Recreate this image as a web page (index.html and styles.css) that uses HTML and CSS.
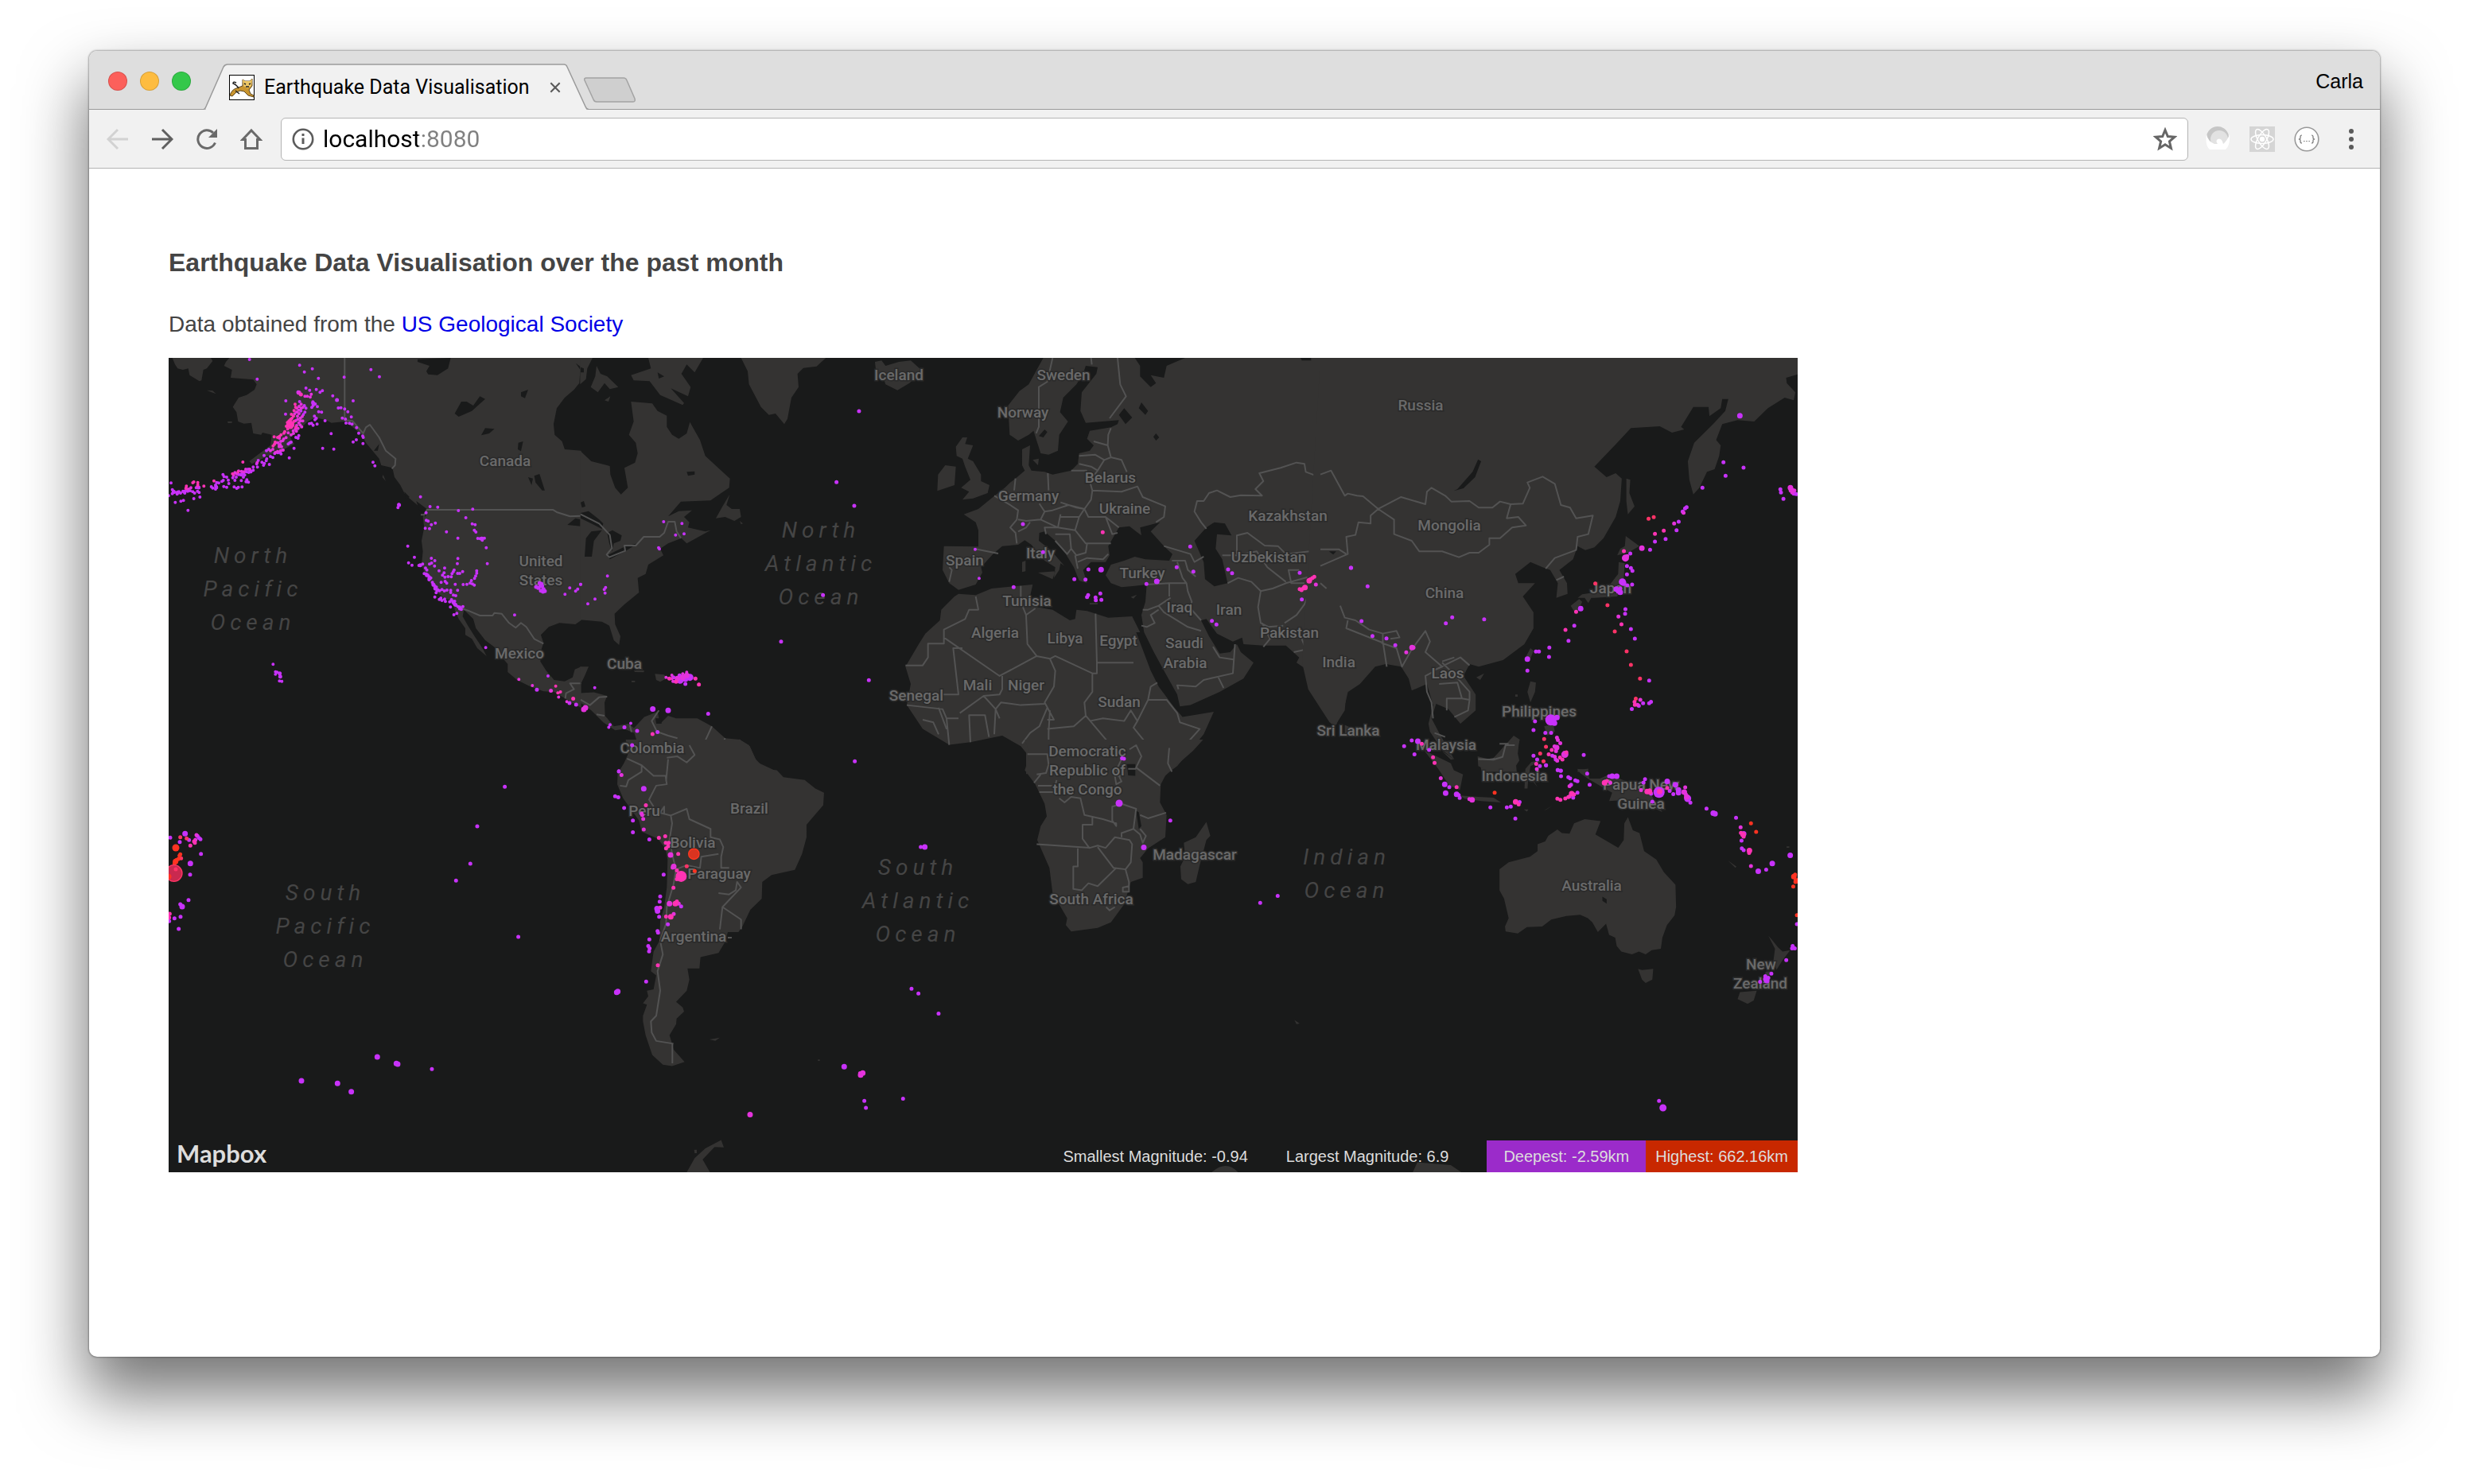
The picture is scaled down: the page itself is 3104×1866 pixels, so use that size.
FILE: index.html
```html
<!DOCTYPE html>
<html lang="en">
<head>
<meta charset="utf-8">
<title>Earthquake Data Visualisation</title>
<link rel="stylesheet" href="styles.css">
</head>
<body>
<div class="window">
  <header class="tabstrip">
    <div class="lights">
      <button class="light light-close" aria-label="Close window"></button>
      <button class="light light-min" aria-label="Minimise window"></button>
      <button class="light light-max" aria-label="Zoom window"></button>
    </div>
    <div class="tab">
      <svg class="tab-shape" viewBox="0 0 484 58" preserveAspectRatio="none" aria-hidden="true"><path d="M0 57.500Q2 57 3 54L25 4Q27 1 30 1H453Q456 1 457 4L480 54Q481 57 484 57.500" fill="#f1f1f1" stroke="#9a9a9a" stroke-width="1.500"/><path d="M3 58H481" stroke="#f1f1f1" stroke-width="2"/></svg>
      <svg class="favicon" viewBox="0 0 32 32" aria-hidden="true"><rect x=".5" y=".5" width="31" height="31" fill="#fff" stroke="#000"/><path d="M1 26Q3 19 9 17L17 14L17 6L20 8H26L29 5L29 14L25 19L27 24L31 26V28L24 26L19 21L14 20L9 22L4 27Z" fill="#c9952f" stroke="#5a4520" stroke-width="1"/><path d="M17 6L20 8H26L29 5L28 14L23 17L18 14Z" fill="#edc766"/><path d="M12 17Q9 12 5 11Q5 8 9 10M8 20L13 24M19 11L21 12M25 12L27 11M21 15H25" fill="none" stroke="#222" stroke-width="1.500"/></svg>
      <span class="tab-title">Earthquake Data Visualisation</span>
      <button class="tab-close" aria-label="Close tab"><svg viewBox="0 0 16 16"><path d="M1.500 1.500L14.500 14.500M14.500 1.500L1.500 14.500" stroke="#5a5a5a" stroke-width="2.400"/></svg></button>
    </div>
    <button class="new-tab" aria-label="New tab"><svg viewBox="0 0 68 32"><path d="M4 1H51Q54 1 55 4L65 27Q66 31 63 31H17Q14 31 13 28L2 4Q1 1 4 1Z" fill="#cfcfcf" stroke="#a3a3a3" stroke-width="1.500"/></svg></button>
    <button class="profile">Carla</button>
  </header>
  <nav class="toolbar" aria-label="Browser toolbar">
    <button class="tool" aria-label="Back"><svg viewBox="0 0 28 28"><path d="M14 2L2 14L14 26M2 14H27" fill="none" stroke="#d2d2d2" stroke-width="3"/></svg></button>
    <button class="tool" aria-label="Forward"><svg viewBox="0 0 28 28"><path d="M14 2L26 14L14 26M26 14H1" fill="none" stroke="#5f5f5f" stroke-width="3"/></svg></button>
    <button class="tool" aria-label="Reload"><svg viewBox="0 0 28 28"><path d="M24.500 18.500A11.300 11.300 0 1 1 22 6" fill="none" stroke="#6a6a6a" stroke-width="3"/><path d="M27 1V12H16Z" fill="#6a6a6a"/></svg></button>
    <button class="tool" aria-label="Home"><svg viewBox="0 0 28 28"><path d="M14 3L25 14.500H21.500V25.500H6.500V14.500H3Z" fill="none" stroke="#6a6a6a" stroke-width="3"/></svg></button>
    <div class="omnibox">
      <svg class="info" viewBox="0 0 28 28" aria-hidden="true"><circle cx="14" cy="14" r="12.200" fill="none" stroke="#5c5c5c" stroke-width="2.600"/><path d="M14 12.500V20M14 7V10" stroke="#5c5c5c" stroke-width="3"/></svg>
      <input class="url" type="text" value="localhost:8080" aria-label="Address">
      <button class="star" aria-label="Bookmark this page"><svg viewBox="0 0 30 30"><path d="M15 3.500L18.300 11.500L27 12.200L20.400 17.900L22.400 26.400L15 21.800L7.600 26.400L9.600 17.900L3 12.200L11.700 11.500Z" fill="none" stroke="#666" stroke-width="3"/></svg></button>
    </div>
    <div class="extensions">
      <button class="ext" aria-label="Phoenix extension"><svg viewBox="0 0 32 32"><path d="M2 14A14 14 0 0 1 30 14L22 22Q16 12 8 22Z" fill="#c6c6c6"/><circle cx="18" cy="16" r="11" fill="#e2e2e2"/><path d="M2 10Q0 24 6 29H26Q32 24 31 10Q28 18 23 22Q21 14 16 16Q13 18 16 22H12Q4 19 2 10Z" fill="#fff"/></svg></button>
      <button class="ext" aria-label="React extension"><svg viewBox="0 0 32 32"><path d="M0 0H32V32H0Z" fill="#d5d5d5"/><g fill="none" stroke="#fff" stroke-width="1.500"><ellipse cx="16" cy="16" rx="14" ry="5.400"/><ellipse cx="16" cy="16" rx="14" ry="5.400" transform="rotate(60 16 16)"/><ellipse cx="16" cy="16" rx="14" ry="5.400" transform="rotate(120 16 16)"/></g><circle cx="16" cy="16" r="3.200" fill="#fff"/></svg></button>
      <button class="ext" aria-label="JSON extension"><svg viewBox="0 0 32 32"><circle cx="16" cy="16" r="14.800" fill="#fff" stroke="#999" stroke-width="1.600"/><g fill="none" stroke="#777" stroke-width="1.200"><path d="M10 11Q8 11 8 13V15L6.500 16L8 17V19Q8 21 10 21M22 11Q24 11 24 13V15L25.500 16L24 17V19Q24 21 22 21"/><path d="M12 18.500H20" stroke-dasharray="1.500 1.700"/></g></svg></button>
      <button class="ext" aria-label="Menu"><svg viewBox="0 0 32 32"><g fill="#5a5a5a"><circle cx="16" cy="6" r="3"/><circle cx="16" cy="16" r="3"/><circle cx="16" cy="26" r="3"/></g></svg></button>
    </div>
  </nav>
  <main class="page">
    <h1 class="title">Earthquake Data Visualisation over the past month</h1>
    <p class="source">Data obtained from the <a href="#usgs">US Geological Society</a></p>
    <div class="map">
      <svg class="map-canvas" viewBox="212 450 2048 1024" role="img" aria-label="World map of earthquakes">
        <!-- North America, west -->
        <g transform="translate(210 450) scale(.3333)">
          <path class="land" d="M20 0L30 25L40 40L60 45L80 40L85 65L122 88L130 85L137 45L150 40L172 12L165 0Z
M235 0L222 15L215 30L245 45L240 75L325 82L338 100L330 120L300 140L270 150L248 185L262 205L268 240L290 248L318 245L325 285L355 290L360 282L395 290L390 330L350 360L310 390L320 400L390 365L440 345L480 325L465 300L500 270L530 240L560 225L600 235L620 245L670 240L700 262L735 290L750 320L775 350L800 380L808 405L850 415L858 450L880 480L900 520L915 530L950 560L975 580L965 600L970 640L960 690L965 730L960 780L975 820L1010 880L1045 905L1080 920L1085 950L1100 985L1125 1020L1125 1045L1150 1060L1170 1095L1205 1125L1195 1105L1180 1080L1160 1050L1135 1010L1115 975L1120 950L1155 985L1165 1020L1200 1065L1240 1095L1255 1120L1285 1155L1285 1185L1320 1215L1370 1240L1420 1258L1460 1260L1510 1290L1562 1320V1165L1538 1175L1530 1205L1500 1220L1460 1215L1430 1180L1408 1145L1412 1100L1420 1075L1410 1045L1440 1015L1480 1000L1540 1005L1562 990V350L1500 345L1490 315L1462 290L1458 250L1470 190L1500 150L1535 120L1555 95L1562 0Z
M150 122L172 124L185 136L168 130ZM228 240L245 240V245L230 246ZM815 440L825 465L812 450Z"/>
          <path class="water" d="M945 5L1070 0L1060 40L1020 65L985 62L978 50L990 30L945 15ZM1085 210L1110 165L1130 165L1155 180L1180 145L1200 155L1150 200L1100 222ZM1335 130L1362 120L1350 152L1335 145ZM1185 292L1200 265L1235 268L1215 285ZM1325 320L1343 315L1335 352L1323 345ZM1362 450L1380 455L1375 480ZM1385 445L1405 438L1425 500L1415 500L1390 470ZM1510 630L1540 605L1562 610V635ZM780 350L800 325L795 350ZM940 540L980 570L975 600L950 570ZM895 505L915 525L900 535ZM1542 20L1562 35V50Z"/>
          <path class="border" d="M670 0V235L700 238L740 285L750 262L765 252L800 300L825 350L862 380L860 405L848 418M957 592H970L980 573H1455L1470 582L1520 598L1562 596M1110 945L1140 955L1180 972H1228L1235 962L1262 965L1290 1000L1315 1018L1335 1000L1355 1015L1385 1060L1420 1078M1502 1285L1505 1265L1535 1250L1520 1228H1562"/>
        </g>
        <!-- North America east, Greenland, Caribbean -->
        <g transform="translate(730 450) scale(.3333)">
          <path class="land" d="M-2 350L40 390L110 408L112 440L130 490L152 515L178 490L165 415L205 395L215 360L208 320L182 290L200 240L190 165L270 172L290 200L325 218L325 260L345 290L370 305L400 285L412 242L450 310L470 370L530 425L563 455L560 490L530 510L490 538L378 542L330 598L370 578L420 575L390 600L410 620L405 640L470 655L490 650L400 700L380 680L330 700L300 720L312 745L255 780L245 815L215 830L220 885L165 930L128 965L130 1005L150 1050L145 1083L125 1065L108 1010L80 995L-2 988Z
M562 515L535 560L510 605L545 600L580 615L605 600L600 570L570 570L550 555ZM600 615L612 625L605 628Z
M255 0L265 40L190 65L200 85L260 88L300 140L385 178L390 170L340 115L405 145L415 110L380 60L400 25L430 55L462 0Z
M-2 0V100L20 80L25 40L45 0ZM60 30L75 60L100 70L142 110L110 118L90 95L65 130L38 110L55 70ZM90 160L112 145L105 165Z
M605 0L630 50L635 100L680 185L710 215L735 210L768 250L780 230L795 150L822 110L818 60L840 38L890 32L925 0Z
M1110 15L1135 10L1150 30L1200 15L1245 10L1290 50L1240 95L1195 122L1150 100L1145 85L1115 60Z
M-2 1165H30L15 1200L-2 1235ZM200 1180L240 1180L238 1186L205 1185ZM280 1192L315 1195L325 1208L300 1222L285 1215ZM192 1218H205V1223H192Z
M-2 1265L50 1262L100 1275L90 1300L92 1350L125 1390L180 1380L205 1400L200 1415L165 1400L130 1405L85 1375L40 1330L-2 1300Z
M198 1400L240 1355L290 1335L300 1380L330 1350L360 1360L440 1360L495 1390L545 1435L600 1440L638 1465L665 1525L740 1560H150L185 1480L210 1440Z"/>
          <path class="water" d="M0 585L30 578L70 610L85 625L80 645L40 625L0 605ZM15 750L20 680L40 655L80 650L50 690L42 750ZM100 660L120 650L155 670L150 690L125 700L118 730L108 700ZM100 745L170 710L215 700L170 728L110 760ZM0 545L12 540L18 560L5 565ZM400 430L430 428V440L405 445ZM290 55L315 70L295 78ZM282 1360L305 1360V1380H285ZM0 35L12 40V55H0Z"/>
          <path class="border" d="M0 590L70 625L110 668L118 718L98 742L108 752L168 728L165 708H208L238 675H298L315 660L330 618H355L362 655L378 680M0 1290L35 1310L70 1280L100 1278M60 1345L90 1350M185 1385L192 1412M295 1330L268 1370L288 1410L330 1425L365 1435M495 1390L472 1440L485 1460L495 1500L515 1515L550 1500L530 1465L545 1435M600 1440L590 1490L550 1500L615 1495L635 1470M410 1460L430 1475L485 1460"/>
        </g>
        <!-- South America -->
        <g transform="translate(730 930) scale(.3333 .3508)">
          <path class="land" d="M170 0L180 60L140 120L138 160L160 210L220 290L230 330L290 355L320 390L328 430L325 530L315 600L300 650L298 720L275 760L265 830L285 845L275 895L250 900L255 920L235 945L250 950L235 990L235 1010L245 1060L270 1130L310 1165L345 1170L392 1155L350 1110L345 1090L335 1060L360 1020L362 1000L390 975L385 960L360 940L400 900L410 860L403 820L448 820L452 780L520 765L545 725L555 690H595L610 670L640 610L683 570L685 510L720 485L808 467L835 410L852 350V305L915 235L918 190L885 175L845 145L765 135L740 110L695 105L660 70L635 20L600 0Z
M485 1075L505 1072L525 1068L508 1080ZM400 1551L430 1500L470 1465L530 1435L540 1462L505 1460L460 1505L488 1551ZM428 1470H438V1482H430ZM895 1147H902V1152H895Z"/>
          <path class="border" d="M175 68L230 92L275 130L320 130L325 160L285 165L258 215L275 240M330 70L322 150M148 165L172 168L180 145L230 115V92M325 65L365 60L400 82L430 55L410 20M300 262L340 272L400 248L410 285L490 320V350L525 358L538 385L530 420V460H560M340 272L345 300L335 360L350 430L360 465L350 520L325 600L322 660L300 720L310 770L290 830L300 900L285 990L265 1010L268 1050L285 1080L350 1090M346 1090V1160M360 465L400 450L450 460L455 420L520 410M520 550L560 555L585 540L590 510L605 530L535 600L525 680M535 600L605 645V680M555 710H570M300 262L315 240V268"/>
        </g>
        <!-- Europe, Middle East, north Africa -->
        <g transform="translate(1180 450) scale(.3333)">
          <path class="land" d="M395 0L340 100L305 125L262 180L268 290L300 312L340 290L358 275L385 360L415 365L450 350L455 290L488 240L458 205L470 150L520 100L545 60L555 30L600 35L595 60L540 130L535 200L555 245L680 235L675 250L650 262L570 275L560 305L585 330L570 350L530 360L525 400L500 425L430 440L400 430L350 425L340 405L345 330L315 345L315 405L325 425L290 455L270 470L250 490L205 525L150 570L95 590L140 620L150 650V712L20 710L15 800L40 850L75 875L140 855L165 810L160 790L205 740L240 710L300 705L325 688L350 705L400 765L440 790L435 830L455 800L460 775L475 785L440 745L410 715L378 690L380 660L400 655L440 690L480 740L510 790L530 840L560 850L545 800L575 770L630 770L645 745L640 710L680 640L720 635L745 655L765 670L760 640L835 620L800 655L850 710L882 740L870 765L780 760L740 750L700 765L650 780L630 820L650 850L690 865L740 860L785 855L780 920L765 970L775 1035L812 1110L850 1180L900 1270L910 1315L950 1310L1060 1260L1150 1210L1188 1150L1140 1110L1125 1080L1100 1110L1060 1115L1020 1050L990 990L1010 985L1050 1040L1110 1070L1145 1055L1150 1080L1225 1085H1310L1360 1130L1350 1150L1380 1170L1400 1150L1425 1250L1480 1380L1500 1385L1535 1300L1545 1255L1562 1240V0Z
M90 300L108 300L100 325L130 330L110 380L130 390L160 440V465L192 480L185 510L130 530L90 535L115 505L85 490L120 460L100 410L90 380L68 370L65 335ZM-2 440L25 405L65 410L60 480L-5 502Z
M375 810L440 805L430 835ZM315 770L328 765V805L315 808ZM725 902L748 893L735 908ZM570 925H600V930H570ZM355 385L378 380L375 405Z
M75 890L140 895L200 870L300 860L355 855L345 900L370 940L430 950L495 990L515 985L520 950L560 955L640 980L730 975L760 1035H745L770 1100L800 1180L830 1240L890 1320L920 1355L1038 1335L1000 1420L900 1540L860 1570H330V1490L310 1465L240 1425L120 1450L40 1460L-60 1400L-120 1310L-105 1230L-125 1165L-75 1080L-50 1040L5 990L10 950L60 900Z"/>
          <path class="water" d="M1010 640L1040 620L1080 625L1105 670L1050 665L1045 720L1070 760L1090 850L1040 862L1005 835L1000 770L965 690ZM700 190L730 225L705 250L680 215ZM765 168L790 200L780 215L755 190ZM740 0L760 30V70L800 110L820 95L800 65L850 75L860 30L930 0ZM820 285L832 300L820 312L810 298ZM1420 660L1445 630L1455 632L1430 665ZM378 295L400 270L410 280L395 300ZM1365 0H1405V10H1370ZM1475 730H1500L1490 742Z"/>
          <path class="border" d="M430 0L410 90L378 110V260L368 285M575 0L578 25M675 0L685 100L707 145L645 228M650 265L640 290L638 330L650 375L690 385L710 430M585 315L638 330M530 370L590 365L625 385L650 375M530 400L575 410L600 425L625 385M600 425L570 465L580 500L690 505L750 485L770 525L855 560L850 600L820 620M500 425H560M580 500L575 535L550 570L520 565L460 545M412 435L415 500M380 550L400 580L430 575L490 555L550 570M290 455L285 500M210 520L270 555L300 575L295 610L270 640L290 660L295 700M400 580L385 610L330 615L300 610M300 655L330 640L345 620M385 610L450 640L460 590M450 640H400L405 665M460 600L530 600L550 570L565 600L630 600L680 640M630 600L655 665L675 660M530 600L515 650L555 700L650 700M450 640L515 650M440 665H495L500 720L485 740L440 690M500 720L520 745L555 735L560 700M515 745L525 795M525 770L560 755L620 760L640 740M135 720L225 738M40 790L50 800L40 845M785 855L870 850L935 850L940 880L955 920L950 945L990 990M880 765L930 765L940 800L970 825M900 770L920 830L935 850M850 710L950 740L965 770L1000 750M870 850V900M875 905L830 935L790 950L770 950M830 935L850 960L940 1015L990 1030M830 950L800 970L815 1000L785 1015L765 1010M905 1250L900 1235L970 1240L1000 1215L1110 1190L1118 1080M1035 1090L1060 1130L1112 1138M1055 1205L1075 1245M1090 850L1130 830L1180 845L1215 880L1205 940L1215 1000L1245 1015L1300 1010M1225 1090L1250 1060L1220 1000M1215 880L1260 870L1310 850L1420 820L1450 850L1400 880L1380 930L1350 970L1305 1000M1010 645L990 620L965 580L975 540L1000 540L1020 510L1050 500L1100 525L1140 518L1220 520L1195 495L1225 465L1210 435L1290 415L1350 395L1380 400L1385 430L1425 445L1480 425L1540 520L1562 515M1125 740V670L1165 660L1230 708L1280 710L1310 740L1400 730L1520 722L1540 740L1535 680L1562 670M1070 745H1125M1150 740L1200 730L1240 790L1310 845M1360 800L1320 800L1330 850L1380 850M1540 740L1490 775L1430 790L1425 820M1455 950L1430 1010L1390 1030L1370 1060L1385 1100L1340 1110M1515 930V960
M140 900L150 950H115L100 985L20 1025V1078H-40V1130L-60 1160H-125M20 1055L230 1200L370 1125L335 1080L330 970L310 920V860M330 970L365 945M370 1125L420 1135L440 1125L580 1190V1260L550 1300L555 1350L510 1390L410 1400M592 965L597 1150V1190H580M597 1150H735M420 1135L440 1180L435 1240L400 1300L435 1365H410M420 1330L415 1410V1570M240 1200V1250L230 1270L170 1275L80 1340M90 1095H55L75 1270H15M-120 1310L15 1325L30 1360H75M-60 1365L-20 1375L0 1420M120 1450L115 1348H175L190 1430M215 1325L210 1420M170 1275L215 1325L230 1360M215 1325L235 1300L310 1310L400 1305M410 1320L380 1390L345 1415L315 1455M30 1360L40 1460M0 1320L30 1400M555 1350L640 1450M570 1370L620 1360L700 1370L725 1330L750 1370M480 1450L550 1460L640 1450M800 1240L825 1225M800 1240L790 1290L860 1290L900 1340L910 1375L985 1400L940 1450L870 1475V1560M790 1290L750 1370L735 1395L780 1450L840 1475L880 1465M780 1450L720 1465"/>
        </g>
        <!-- Southern Africa -->
        <g transform="translate(1180 930) scale(.3333 .3508)">
          <path class="land" d="M325 0L345 50L325 110L365 160L400 230L408 275L385 310L372 360L418 460L430 550L485 640L480 665L500 688L600 675L650 655L700 590L725 510L770 495V440L760 425L790 390L855 350L860 270L835 225L838 160L855 130L900 90L960 40L998 0Z
M1010 295L1025 345L1010 360L985 450L970 510L940 518L915 500L912 455L930 420L925 370L970 350ZM1342 1005L1362 1018L1350 1020ZM1030 1551Q1085 1505 1130 1551Z"/>
          <path class="water" d="M710 88H742V130L715 128ZM745 255L755 260L765 310L755 320Z"/>
          <path class="border" d="M335 52H410L415 90L405 120L370 125M360 155L385 125M375 165H440L445 145M380 188H440M455 210L475 225L500 205L535 210L550 270L620 285L670 300V310L655 290V240L690 230L745 248L735 320L690 335V350M580 275V305H543V355L570 390M370 375L570 388L600 380L630 388L665 350L720 360L730 375L725 440L705 465L660 460L600 385M525 390V455H508V535L540 540L565 515L600 525L670 460M705 465L718 510V545H695V530L718 525M632 600L645 612L665 600M735 320L760 340L770 370L782 345L760 320M760 270L790 282L858 262M720 35L745 20L765 60L745 100L835 165M745 105H715M690 70L670 110L690 150L670 160L665 130H690M870 30L865 85L880 115"/>
        </g>
        <!-- Asia and the north-west Pacific -->
        <g transform="translate(1660 450) scale(.3827 .3333)">
          <path class="land" d="M0 0H1568V62L1530 75L1532 95L1560 130L1555 160L1525 150L1470 190L1425 240L1370 235L1320 250L1300 310L1315 330L1310 370L1295 420L1270 430L1245 490L1225 515L1212 460L1207 390L1228 320L1290 250L1330 200L1340 155L1320 155L1315 190L1278 220L1275 185L1225 185L1185 260L1195 270L1155 282L1115 258L1020 265L975 320L900 410L940 450L970 435L990 455L985 540L970 600L930 680L900 715L870 725L845 710L830 760L785 800L810 850L812 890L775 905L780 850L755 800L730 790L690 770L640 815L650 850L705 850L665 900L700 960L700 1020L670 1080L600 1140L520 1165L490 1155L470 1200L510 1270V1330L460 1380L420 1325L380 1305L365 1360L390 1415L440 1515L400 1480L360 1410L355 1380L370 1310L350 1230L300 1255L290 1210L265 1165L215 1155L180 1165L130 1230L85 1265L80 1330L50 1385L30 1375L-40 1250L-60 1150Z
M1005 455L1018 460L1015 510L1032 560L1010 590L1005 540ZM1003 672L1048 710L1010 735L975 745L985 720L1000 710ZM980 770L1000 775L995 850L975 900L900 905L845 905L860 892L900 885L945 865L978 815ZM822 935L850 910L860 920L840 968ZM868 905L890 905L880 925ZM690 1095L700 1105L688 1140L676 1125ZM512 1205L538 1190L525 1215ZM690 1220L708 1225L705 1260L690 1300L680 1260ZM735 1390L765 1380L770 1410L745 1425ZM690 1345L740 1340L745 1365ZM520 1510L560 1520L600 1470L635 1425L655 1440L640 1500L645 1562H530ZM340 1480L380 1510L430 1562H395ZM80 1385L100 1395L95 1430L80 1420ZM640 1270H648V1278H640ZM845 1555L880 1550V1562H845Z"/>
          <path class="water" d="M438 502L470 492L508 450L528 390L518 383L500 430L450 495ZM28 730H52L42 742Z"/>
          <path class="border" d="M0 440L35 425L80 520L90 512L120 520L140 522L190 570L265 525L345 552L350 505L365 490L410 520L430 542L490 540L520 565H565L590 542L625 552L612 605L650 600L675 632L630 640L590 680H555V705L520 735H490L455 752L400 730H325L300 690L242 665V610L190 570L165 595V625L125 620L115 668L85 675L90 740L0 785M625 552L665 550L688 490L680 470L730 448L770 475L790 555L820 565L840 605L895 595L880 665L845 675L840 725L770 755L740 795M775 838L800 825M0 850L20 870M65 935L80 980L115 990L160 1025L205 1040L250 1030L260 1055L230 1060M205 1040V1075L85 1020L90 990M205 1070L218 1165M200 1075L250 1095L268 1165L300 1100L345 1030L360 1070L345 1110L400 1165L370 1180L460 1130L490 1160M400 1145L440 1130M370 1185L345 1200L350 1260L365 1300L370 1360M390 1230L450 1225L465 1285H415V1330M465 1285L490 1290L485 1330L440 1355M400 1150L440 1195L490 1260V1290M0 722H60L85 740M525 1520L590 1510L615 1465H640M375 1415L410 1430"/>
        </g>
        <!-- Oceania -->
        <g transform="translate(1690 930) scale(.3827 .3508)">
          <path class="land" d="M275 45L350 85L360 110L390 125L380 180L345 165L300 90ZM320 40L360 70L350 72ZM380 200L440 205L490 208L515 225L450 220L395 212ZM438 60L490 75L530 15L575 0L570 50L575 75L555 110L470 110L440 95ZM592 175L595 105L615 80L650 75L612 95L608 120L635 170L605 130L602 175ZM655 255L685 235L665 250ZM590 250L605 250L600 258ZM765 105L800 108L805 140L840 140L870 125L950 160L1000 180L1020 220L1045 260L980 225L940 215L870 220L880 190L840 165L800 140L775 120ZM1260 433L1288 455L1285 460Z
M510 465L540 440L610 420L635 400V375L660 365L670 345L700 322L715 335L740 337L755 300L790 285L842 292L825 340L900 388L918 360L920 300L932 278L948 325L970 335L985 400L1025 430L1050 475L1088 520L1090 600L1085 630L1060 665L1045 710L1040 750L1010 755L990 770L968 760L945 770L910 760L895 740L890 710L870 700L860 660L833 690L815 655L800 640L775 628L730 632L680 645L650 670L600 672L570 695L530 688L528 670L540 640L525 570L510 540Z
M965 822L978 826L1015 822L1012 860L990 872L978 860ZM1393 703L1405 718L1425 745L1440 760L1465 755L1440 790L1420 825L1410 790L1415 750ZM1370 870L1385 832L1400 830L1390 860ZM1355 900L1345 935L1325 947L1292 930L1300 905ZM225 1551L240 1515L350 1525L385 1551ZM1453 383H1462V388H1453Z"/>
          <path class="water" d="M848 563L862 572V588L848 578Z"/>
          <path class="border" d="M440 70L490 72L520 62L530 20H560M510 15H540"/>
        </g>

        <g class="place">
          <text x="635" y="586">Canada</text><text x="680" y="712">United</text><text x="680" y="736">States</text><text x="653" y="828">Mexico</text><text x="785" y="841">Cuba</text><text x="820" y="947">Colombia</text><text x="1130" y="478">Iceland</text><text x="1213" y="711">Spain</text><text x="1152" y="881">Senegal</text>
          <text x="1337" y="478">Sweden</text><text x="1286" y="525">Norway</text><text x="1396" y="607">Belarus</text><text x="1293" y="630">Germany</text><text x="1414" y="646">Ukraine</text><text x="1308" y="702">Italy</text><text x="1436" y="727">Turkey</text><text x="1291" y="762">Tunisia</text><text x="1251" y="802">Algeria</text><text x="1339" y="809">Libya</text><text x="1406" y="812">Egypt</text><text x="1483" y="770">Iraq</text><text x="1545" y="773">Iran</text><text x="1489" y="815">Saudi</text><text x="1490" y="840">Arabia</text><text x="1229" y="868">Mali</text><text x="1290" y="868">Niger</text><text x="1407" y="889">Sudan</text><text x="1619" y="655">Kazakhstan</text><text x="1595" y="707">Uzbekistan</text><text x="1621" y="802">Pakistan</text>
          <text x="1786" y="516">Russia</text><text x="1822" y="667">Mongolia</text><text x="1816" y="752">China</text><text x="1683" y="839">India</text><text x="1820" y="853">Laos</text><text x="1695" y="925">Sri Lanka</text><text x="1818" y="943">Malaysia</text><text x="1935" y="901">Philippines</text><text x="2025" y="746">Japan</text>
          <text x="1367" y="951">Democratic</text><text x="1367" y="975">Republic of</text><text x="1367" y="999">the Congo</text><text x="1502" y="1081">Madagascar</text><text x="1372" y="1137">South Africa</text><text x="810" y="1026">Peru</text><text x="942" y="1023">Brazil</text><text x="871" y="1066">Bolivia</text><text x="904" y="1105">Paraguay</text><text x="872" y="1184">Argentina</text>
          <text x="1904" y="982">Indonesia</text><text x="2063" y="993">Papua New</text><text x="2063" y="1017">Guinea</text><text x="2001" y="1120">Australia</text><text x="2214" y="1219">New</text><text x="2213" y="1243">Zealand</text>
        </g>
        <g class="sea">
          <text x="318" y="708">North</text><text x="318" y="750">Pacific</text><text x="318" y="792">Ocean</text>
          <text x="1032" y="676">North</text><text x="1032" y="718">Atlantic</text><text x="1032" y="760">Ocean</text>
          <text x="409" y="1132">South</text><text x="409" y="1174">Pacific</text><text x="409" y="1216">Ocean</text>
          <text x="1154" y="1100">South</text><text x="1154" y="1142">Atlantic</text><text x="1154" y="1184">Ocean</text>
          <text x="1693" y="1087">Indian</text><text x="1693" y="1129">Ocean</text>
        </g>

        <!-- Quakes: colour is depth, stroke width is magnitude -->
        <g transform="translate(210 450) scale(.3333)">
          <path class="q q1 shallow" d="M311 6h0M340 80h0M500 28h0M518 53h0M548 41h0M571 77h0M668 73h0M769 44h0M801 71h0M448 162h0M447 212h0M524 114h0M538 122h0M563 119h0M586 124h0M577 130h0M625 143h0M702 162h0M646 189h0M656 188h0M670 193h0M682 203h0M695 223h0M661 227h0M673 231h0M675 246h0M688 247h0M698 250h0M715 263h0M723 284h0M738 295h0M740 300h0M714 309h0M702 317h0M739 323h0M619 286h0M587 341h0M629 344h0M596 237h0M551 254h0M537 248h0M545 247h0M558 233h0M563 228h0M566 250h0M556 220h0M572 203h0M583 205h0M567 184h0M559 174h0M550 166h0M546 187h0M551 180h0M520 205h0M514 214h0M524 190h0M518 180h0M505 200h0M500 165h0M479 341h0M461 377h0M494 303h0M486 300h0M497 293h0M463 320h0M457 325h0M468 318h0M777 394h0M784 407h0M874 553h0M871 565h0M384 345h0M375 350h0M366 368h0M344 387h0M338 400h0M341 412h0M358 394h0M367 398h0M374 388h0M386 402h0M364 405h0M376 381h0M390 372h0M399 376h0M406 361h0M418 358h0M427 357h0M435 348h0M430 362h0M211 440h0M215 448h0M225 450h0M207 466h0M212 462h0M231 461h0M233 474h0M214 485h0M225 488h0M248 452h0M256 462h0M261 450h0M253 487h0M263 492h0M269 488h0M283 487h0M280 463h0M298 467h0M307 469h0M301 460h0M288 450h0M293 442h0M308 432h0M316 430h0M325 424h0M325 412h0M306 420h0M299 430h0M270 440h0M281 440h0M288 436h0M187 470h0M183 480h0M187 490h0M172 491h0M167 486h0M195 472h0M183 495h0M15 472h0M6 520h0M20 497h0M20 512h0M28 507h0M38 514h0M45 505h0M51 510h0M60 503h0M67 510h0M72 500h0M78 503h0M87 501h0M97 505h0M104 510h0M115 503h0M121 508h0M110 490h0M101 531h0M124 525h0M31 545h0M52 541h0M62 538h0M79 575h0M956 524h0M1021 563h0M992 561h0M977 584h0M978 613h0M985 616h0M997 629h0M1012 623h0M974 643h0M990 644h0M1054 656h0M1097 680h0M1099 576h0M1153 571h0M1127 603h0M1151 626h0M1162 629h0M1159 650h0M1165 657h0M1172 681h0M1181 682h0M1188 680h0M1189 688h0M1197 680h0M1204 716h0M1208 776h0M908 710h0M933 752h0M911 773h0M924 782h0M950 783h0M964 778h0M997 756h0M1010 765h0M998 774h0M990 778h0M1009 785h0M975 793h0M980 800h0M970 814h0M978 815h0M984 820h0M989 826h0M988 837h0M995 830h0M1001 847h0M1004 855h0M1010 861h0M1016 865h0M1020 875h0M1028 878h0M1015 886h0M1010 902h0M1027 911h0M1033 906h0M1037 915h0M1047 910h0M1050 919h0M1066 920h0M1073 912h0M1078 919h0M1085 918h0M1083 928h0M1090 933h0M1097 938h0M1104 940h0M1110 949h0M1116 938h0M1069 940h0M1082 969h0M1093 964h0M1097 757h0M1095 776h0M1083 800h0M1080 806h0M1075 814h0M1096 813h0M1104 813h0M1115 806h0M1047 793h0M1026 803h0M1045 811h0M1039 820h0M1048 827h0M1060 825h0M1072 826h0M1049 843h0M1034 847h0M1055 850h0M1056 876h0M1046 879h0M1037 874h0M1070 877h0M1070 885h0M1080 895h0M1089 897h0M1096 877h0M1087 854h0M1117 855h0M1131 854h0M1143 850h0M1148 840h0M1152 853h0M1159 857h0M1160 832h0M1164 823h0M1168 812h0M1168 803h0M1501 892h0M1519 868h0M1541 880h0M1549 872h0M1560 854h0M1311 970h0M1202 1093h0M400 1156h0M409 1184h0M409 1193h0M415 1186h0M424 1219h0M433 1220h0M1437 1200h0"/>
          <path class="q q2 shallow" d="M641 159h0M875 555h0M495 130h0M185 487h0M119 489h0M65 505h0M25 505h0M40 508h0M280 440h0M315 428h0M425 1190h0M427 1202h0M551 170h0M980 820h0M990 832h0M1005 856h0M1012 870h0M1020 876h0M1080 922h0M1087 931h0M1105 945h0M955 782h0M1187 682h0M1395 1252h0M1518 1302h0M1543 1308h0M1405 850h0M1415 860h0M1420 872h0M1410 878h0M1392 864h0M1425 880h0M1400 868h0M1412 852h0M1418 882h0M1408 862h0"/>
          <path class="q q1 mid" d="M500 130h0M520 145h0M540 148h0M529 145h0M544 137h0M506 175h0M498 183h0M489 190h0M512 187h0M497 197h0M506 190h0M489 204h0M481 211h0M498 210h0M510 221h0M503 227h0M493 232h0M485 237h0M492 220h0M503 238h0M512 238h0M497 245h0M502 253h0M489 255h0M508 260h0M494 266h0M484 268h0M476 275h0M488 277h0M477 285h0M468 290h0M457 283h0M449 301h0M440 306h0M437 312h0M429 315h0M424 303h0M418 320h0M409 320h0M427 327h0M432 335h0M423 335h0M438 348h0M428 350h0M417 353h0M409 357h0M399 345h0M390 350h0M270 427h0M262 437h0M256 433h0M251 443h0M281 428h0M290 430h0M297 420h0M312 420h0M340 395h0M80 495h0M90 490h0M115 485h0M1327 1213h0M1378 1236h0M1477 1280h0M1508 1297h0"/>
          <path class="q q1 deep" d="M483 175h0M485 186h0M479 199h0M469 213h0M477 220h0M471 228h0M467 232h0M478 240h0M486 262h0M466 232h0M460 238h0M454 244h0M450 258h0M455 268h0M444 278h0M441 284h0M430 290h0M424 296h0M417 300h0M404 298h0M408 318h0M400 332h0M405 326h0M286 393h0M268 430h0M247 437h0M177 464h0M139 484h0M97 471h0M101 468h0M116 470h0M116 479h0M73 484h0M71 492h0M1466 1238h0M1474 1264h0M1484 1260h0"/>
          <path class="q q2 deep" d="M505 138h0M1532 1286h0"/>
          <path class="q q2 mid" d="M1448 1256h0M497 132h0M425 330h0"/>
          <path class="q q3 deep" d="M463 245h0M466 258h0M470 252h0M460 252h0"/>
        </g>
        <g transform="translate(730 450) scale(.3333)">
          <path class="q q1 shallow" d="M313 618h0M382 625h0M358 668h0M390 664h0M294 716h0M297 721h0M101 823h0M94 866h0M89 874h0M92 887h0M54 910h0M0 854h0M1488 722h0M1503 832h0M53 1244h0M106 1394h0M111 1384h0M189 1379h0M194 1462h0M144 1558h0M27 928h0"/>
          <path class="q q2 shallow" d="M1050 201h0M965 469h0M1032 558h0M914 895h0M756 1070h0M1087 1216h0M1034 1522h0M481 1343h0M165 1394h0M213 1407h0M290 1412h0M373 1198h0M395 1230h0M350 1205h0"/>
          <path class="q q1 mid" d="M322 1205h0M333 1209h0M344 1197h0M345 1210h0M356 1220h0M348 1220h0M400 1186h0M433 1210h0M385 1192h0M446 1232h0"/>
          <path class="q q3 shallow" d="M272 1325h0M375 1215h0M395 1212h0M410 1205h0M330 1330h0"/>
          <path class="q q4 shallow" d="M412 1205h0M375 1216h0"/>
          <path class="q q3 mid" d="M365 1210h0M385 1205h0M400 1198h0M12 1326h0M18 1320h0"/>
          <path class="q q2 deep" d="M446 1232h0M433 1210h0M271 1419h0M335 1210h0M360 1222h0"/>
        </g>
        <g transform="translate(1180 450) scale(.3333)">
          <path class="q q2 shallow" d="M318 627h0M394 733h0M565 798h0M512 835h0M554 836h0M283 865h0M564 895h0M560 902h0M592 904h0M593 914h0M610 889h0M614 913h0M784 853h0M898 790h0M949 712h0M961 806h0M1092 798h0M1107 812h0M1031 992h0M1048 1006h0M1362 811h0M1370 911h0M1555 792h0M692 1511h0M699 1512h0"/>
          <path class="q q3 shallow" d="M613 799h0M823 843h0"/>
          <path class="q q2 deep" d="M619 658h0M1403 835h0M1410 830h0M1417 826h0M1362 872h0M1369 876h0M1375 870h0"/>
          <path class="q q3 deep" d="M1398 841h0M1382 866h0"/><path class="q q2 mid" d="M1423 855h0"/>
        </g>
        <g transform="translate(1660 450) scale(.3827 .3333)">
          <path class="q q2 shallow" d="M101 792h0M155 862h0M135 993h0M171 1049h0M217 1058h0M246 1084h0M412 1001h0M433 979h0M538 986h0M1324 394h0M1390 414h0M1331 445h0M1255 490h0M1203 563h0M1198 568h0M1190 580h0M1177 618h0M1170 650h0M1134 683h0M1099 693h0M1083 724h0M1018 738h0M1007 785h0M1020 793h0M1025 803h0M1007 817h0M1024 855h0M1008 858h0M985 870h0M1002 948h0M1001 965h0M1020 1023h0M1033 1059h0M834 1010h0M815 1067h0M752 1093h0M751 1128h0M718 1108h0M708 1108h0M680 1180h0M1511 496h0M1513 508h0M1521 532h0M1555 512h0M1563 514h0M1552 502h0M1080 1217h0M1086 1298h0M1080 1303h0M1060 1303h0M1046 1313h0M1023 1325h0M705 1371h0M700 1404h0M739 1415h0M758 1415h0M275 1465h0M300 1443h0M309 1496h0M357 1479h0M865 1498h0M700 1501h0M712 1515h0M762 1501h0M741 1537h0M721 1540h0M780 1555h0M790 1557h0M773 1515h0"/>
          <path class="q q3 shallow" d="M1378 218h0M855 946h0M680 1136h0M320 1446h0M996 850h0M980 880h0M972 872h0M985 884h0"/>
          <path class="q q4 shallow" d="M992 845h0"/><path class="q q3 mid" d="M1056 718h0M1544 490h0M1547 498h0M301 1093h0M776 1470h0"/><path class="q q4 mid" d="M1002 755h0M803 1496h0"/>
          <path class="q q6 shallow" d="M757 1366h0"/><path class="q q3 shallow" d="M777 1357h0M769 1378h0"/>
          <path class="q q2 mid" d="M282 1111h0M306 1093h0M1008 748h0M1162 625h0M1193 584h0M979 976h0M1550 508h0M1042 1309h0M1051 1290h0M777 1433h0M780 1442h0M788 1454h0M769 1466h0M774 1484h0M770 1505h0M778 1520h0M711 1551h0M1557 500h0"/>
          <path class="q q2 deep" d="M1128 652h0M1099 664h0M997 729h0M840 958h0M805 1026h0M989 1005h0M1032 1298h0M1033 1309h0M333 1456h0M370 1507h0M375 1528h0M760 1479h0M750 1496h0M787 1508h0M795 1515h0M709 1532h0M808 1488h0"/>
          <path class="q q2 deeper" d="M1078 607h0M1095 601h0M903 851h0M943 933h0M967 1032h0M1006 1107h0M1020 1158h0M1050 1210h0M1036 1286h0M735 1438h0M741 1467h0M722 1493h0M733 1522h0"/>
        </g>
        <g transform="translate(210 960) scale(.3333)">
          <path class="q q2 shallow" d="M1274 88h0M1170 237h0M1144 378h0M1090 442h0M1325 654h0M999 1153h0M12 280h0M83 289h0M115 274h0M121 281h0M126 286h0M128 341h0M87 419h0M81 515h0M50 531h0M28 584h0M51 578h0M44 624h0M8 595h0M48 296h0"/>
          <path class="q q3 shallow" d="M68 265h0M88 377h0M57 540h0M793 1107h0M643 1207h0M695 1238h0M507 1197h0M870 1134h0M865 1132h0"/>
          <path class="q q2 mid" d="M111 270h0M107 288h0"/><path class="q q2 deep" d="M102 294h0M105 299h0M88 310h0M10 567h0M8 581h0"/>
          <path class="q q2 deeper" d="M74 283h0M50 278h0M53 358h0"/><path class="q q2 deepest" d="M50 343h0M47 348h0M28 378h0M42 361h0M36 364h0"/>
          <path class="q q4 deepest" d="M33 318h0"/><path class="q q3 deepest" d="M32 370h0"/>
          <circle cx="26" cy="414" r="31" fill="#c9294f" stroke="#ff3565" stroke-width="4"/><path class="q q2 deeper" d="M33 399h0"/><path class="q q3 deepest" d="M6 427h0"/>
        </g>
        <g transform="translate(730 930) scale(.3333 .3508)">
          <path class="q q2 shallow" d="M144 114h0M130 203h0M142 207h0M164 245h0M197 290h0M197 332h0M259 358h0M313 484h0M300 562h0M298 581h0M296 635h0M329 662h0M290 686h0M292 692h0M379 598h0M259 716h0M255 740h0M260 748h0M258 759h0M247 867h0M1283 385h0M1248 893h0M1274 910h0M1350 982h0M1070 1295h0M1076 1320h0M1216 1287h0M194 20h0"/>
          <path class="q q3 shallow" d="M238 176h0M288 606h0M290 614h0M1298 385h0M994 1172h0M136 906h0M140 903h0"/>
          <path class="q q3 mid" d="M639 1344h0M1056 1202h0M1064 1195h0M339 413h0M335 588h0M351 455h0"/>
          <path class="q q2 mid" d="M154 127h0M230 265h0M232 270h0M236 284h0M238 322h0M347 459h0M1054 1196h0M300 602h0M370 588h0M351 625h0"/>
          <path class="q q2 deep" d="M246 235h0M295 352h0M319 346h0M321 370h0M332 370h0M330 382h0M322 390h0M368 410h0M363 469h0M350 531h0M363 580h0M322 634h0M291 809h0M363 500h0"/>
          <path class="q q2 deeper" d="M400 454h0"/><path class="q q2 deepest" d="M430 471h0"/>
          <path class="q q3 deep" d="M357 588h0M340 635h0"/><path class="q q6 deep" d="M379 490h0"/>
          <ellipse cx="427" cy="410" rx="20" ry="19" fill="#d93420" stroke="#ff3820" stroke-width="4"/>
        </g>
        <g transform="translate(1180 930) scale(.3333 .3508)">
          <path class="q q4 shallow" d="M681 228h0"/><path class="q q2 shallow" d="M874 290h0M1279 560h0M1213 585h0"/><path class="q q3 shallow" d="M774 386h0"/>
        </g>
        <g transform="translate(1690 930) scale(.3827 .3508)">
          <path class="q q2 shallow" d="M663 92h0M712 131h0M711 112h0M701 109h0M736 135h0M742 139h0M759 146h0M766 149h0M766 190h0M806 162h0M798 122h0M745 162h0M752 208h0M870 131h0M983 154h0M988 142h0M1069 184h0M1081 195h0M1012 222h0M1008 194h0M1137 226h0M1190 247h0M1287 280h0M1305 362h0M1306 390h0M1312 396h0M1386 466h0M1473 740h0M1480 748h0M1471 748h0M1452 790h0M1403 839h0M1383 848h0M1393 854h0M1366 868h0M1034 1295h0M345 170h0M376 199h0M379 209h0M480 243h0M534 243h0M547 240h0M562 283h0M576 224h0M1487 661h0"/>
          <path class="q q3 shallow" d="M330 160h0M333 192h0M895 131h0M880 131h0M1061 150h0M1088 162h0M1098 180h0M1098 190h0M1212 264h0M1218 266h0M1312 338h0M1360 472h0M1406 444h0M1465 415h0M1385 858h0M1388 864h0M369 196h0"/>
          <path class="q q4 shallow" d="M1128 211h0M1047 1320h0"/><path class="q q6 shallow" d="M1034 189h0"/>
          <path class="q q2 mid" d="M317 138h0M411 213h0M421 216h0M740 167h0M874 155h0M975 181h0M1120 171h0M1114 187h0M1122 196h0M1302 314h0M1336 453h0M740 204h0"/>
          <path class="q q3 mid" d="M1117 188h0M1125 205h0M420 216h0"/>
          <path class="q q2 deep" d="M369 170h0M573 232h0M700 212h0M710 216h0M726 211h0M736 206h0M755 197h0M857 156h0M863 148h0M1061 173h0M1003 182h0M1303 334h0M1312 348h0M1330 406h0"/>
          <path class="q q3 deep" d="M563 223h0M747 194h0M855 155h0M995 186h0M1003 187h0M1310 340h0M1331 398h0M1036 186h0"/>
          <path class="q q2 deepest" d="M494 190h0M1336 300h0M1353 331h0M1481 484h0M1475 492h0M1475 527h0M1482 510h0M1487 629h0"/>
          <path class="q q3 deepest" d="M1477 491h0M1485 506h0"/>
        </g>
      </svg>
      <a class="brand" href="#mapbox">Mapbox</a>
      <div class="legend">
        <span class="key">Smallest Magnitude: -0.94</span>
        <span class="key">Largest Magnitude: 6.9</span>
        <span class="key key-deep">Deepest: -2.59km</span>
        <span class="key key-high">Highest: 662.16km</span>
      </div>
    </div>
  </main>
</div>
</body>
</html>
```

FILE: styles.css
```css
* { box-sizing: border-box; }

body {
  margin: 0;
  padding: 64px 112px 160px;
  min-height: 100vh;
  display: flex;
  background: #fff;
  font-family: "Liberation Sans", Arial, sans-serif;
}

button {
  display: block;
  margin: 0;
  padding: 0;
  border: 0;
  background: none;
  font: inherit;
  flex: none;
}

svg { display: block; }

.window {
  flex: 1;
  min-width: 0;
  display: flex;
  flex-direction: column;
  border-radius: 10px;
  background: #fff;
  box-shadow: 0 0 2px 1px rgba(0, 0, 0, .3), 0 44px 80px 4px rgba(0, 0, 0, .54);
}

/* Tab strip */
.tabstrip {
  display: flex;
  align-items: flex-end;
  height: 74px;
  padding: 0 21px 0 24px;
  border-bottom: 1px solid #9a9a9a;
  border-radius: 10px 10px 0 0;
  background: #dedede;
}

.lights {
  display: flex;
  gap: 16px;
  align-self: center;
  padding-top: 2px;
}

.light {
  width: 24px;
  height: 24px;
  border-radius: 50%;
  border: 1px solid rgba(0, 0, 0, .15);
}
.light-close { background: #fc605b; }
.light-min { background: #fdbc40; }
.light-max { background: #34c84a; }

.tab {
  position: relative;
  display: flex;
  align-items: center;
  width: 484px;
  height: 58px;
  margin: 0 0 -1px 16px;
  padding: 2px 35px 0 32px;
}

.tab-shape {
  position: absolute;
  inset: 0;
  width: 100%;
  height: 100%;
}

.favicon {
  position: relative;
  width: 32px;
  height: 32px;
  flex: none;
}

.tab-title {
  position: relative;
  flex: 1;
  margin-left: 12px;
  font: 25px/32px Roboto, sans-serif;
  white-space: nowrap;
}

.tab-close { position: relative; width: 14px; height: 14px; }
.tab-close svg { width: 14px; height: 14px; }

.new-tab { margin: 0 auto 8px -7px; width: 68px; }

.profile {
  align-self: center;
  padding-top: 2px;
  font-size: 25px;
  line-height: 28px;
}

/* Toolbar */
.toolbar {
  display: flex;
  align-items: center;
  gap: 28px;
  height: 74px;
  padding: 0 20px 0 22px;
  border-bottom: 1px solid #b4b4b4;
  background: #f1f1f1;
}

.tool { width: 28px; height: 28px; }

.omnibox {
  flex: 1;
  display: flex;
  align-items: center;
  gap: 11px;
  height: 54px;
  margin-left: -5px;
  padding: 0 13px;
  border: 1px solid #b4b4b4;
  border-radius: 6px;
  background: #fff;
}

.info { width: 28px; height: 28px; flex: none; }

.url {
  flex: 1;
  min-width: 0;
  height: 40px;
  padding: 0;
  border: 0;
  outline: 0;
  font: 30px/40px Roboto, sans-serif;
  color: transparent;
  background: linear-gradient(90deg, #000 120px, #808080 120px);
  -webkit-background-clip: text;
  background-clip: text;
}

.star { width: 30px; height: 30px; }

.extensions { display: flex; gap: 24px; margin-left: -7px; }
.ext { width: 32px; height: 32px; }

/* Page */
.page { padding: 98px 100px 64px; color: #444; }

.title {
  margin: 0 0 40px;
  font-size: 32px;
  line-height: 40px;
}

.source {
  margin: 0 0 24px;
  font-size: 28px;
  line-height: 36px;
}
.source a { color: #0000e6; text-decoration: none; }

.map {
  position: relative;
  max-width: 2048px;
  background: #191a1a;
}

.map-canvas { width: 100%; height: auto; }

.land { fill: #343332; }
.water { fill: #191a1a; }
.border {
  fill: none;
  stroke: #535353;
  stroke-width: 2;
  stroke-linejoin: round;
  vector-effect: non-scaling-stroke;
}

.place text {
  font: 500 19px Roboto, sans-serif;
  text-anchor: middle;
  fill: #6a6a6a;
  stroke: #2a2a2a;
  stroke-width: 3;
  paint-order: stroke;
}

.sea text {
  font: italic 400 28px Roboto, sans-serif;
  letter-spacing: 6px;
  text-anchor: middle;
  fill: #454545;
}

.q {
  fill: none;
  stroke-linecap: round;
  vector-effect: non-scaling-stroke;
}
.q1 { stroke-width: 4; }
.q2 { stroke-width: 5; }
.q3 { stroke-width: 7; }
.q4 { stroke-width: 9; }
.q6 { stroke-width: 14; }
.shallow { stroke: #c832fa; }
.mid { stroke: #e433dc; }
.deep { stroke: #ff33b4; }
.deeper { stroke: #ff3367; }
.deepest { stroke: #ff3322; }

.brand {
  position: absolute;
  left: 10px;
  bottom: 6px;
  font: 700 31px/36px "Lato", sans-serif;
  color: #ddd;
  text-decoration: none;
}

.legend {
  position: absolute;
  right: 0;
  bottom: 0;
  display: flex;
  font-size: 20px;
  line-height: 40px;
  color: #ddd;
  white-space: nowrap;
}
.key { padding: 0 24px; }
.key-deep { margin-left: 24px; padding: 0 21px; background: rgba(158, 44, 206, .98); }
.key-high { padding: 0 12px; background: #c82800; }
```
